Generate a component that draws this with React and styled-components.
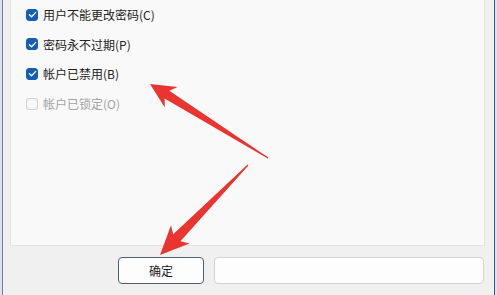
import React from 'react';
import styled, {createGlobalStyle} from 'styled-components';

const GlobalStyle = createGlobalStyle`
    html, body {
        margin: 0;
        padding: 0;
        background: #cfe0f1;
    }
    body {
        font-family: "Noto Sans CJK SC", "Noto Sans", sans-serif;
    }
`;

const Frame = styled.div`
    position: relative;
    width: 497px;
    height: 295px;
    overflow: hidden;
    background: #d6e4f2;
    padding: 0 2px 0 2px;
    box-sizing: border-box;
`;

const Window = styled.div`
    height: 100%;
    display: flex;
    flex-direction: column;
    background: #f0f0f0;
    border-left: 1px solid #71808e;
    border-right: 1px solid #2f5f9a;
`;

const Panel = styled.div`
    height: 246px;
    margin: 0 9px 0 7px;
    box-sizing: border-box;
    background: #f9f9f9;
    border: 1px solid #e4e4e4;
    border-top: none;
    padding-left: 15px;
    display: flex;
    flex-direction: column;
`;

const Row = styled.label`
    height: 29.6px;
    display: flex;
    align-items: center;
    gap: 5px;
    font-size: 12px;
    color: ${p => (p.disabled ? '#a3a3a3' : '#222')};
`;

const Box = styled.span`
    width: 12px;
    height: 12px;
    box-sizing: border-box;
    border-radius: 3px;
    display: flex;
    align-items: center;
    justify-content: center;
    background: ${p => (p.checked ? '#155fb3' : '#f8f8f8')};
    border: 1px solid ${p => (p.checked ? '#155fb3' : '#cfcfcf')};
`;

const Footer = styled.div`
    flex: 1;
    display: flex;
    justify-content: flex-end;
    align-items: flex-start;
    gap: 10px;
    padding: 11px 10px 0 0;
`;

const Button = styled.div`
    width: ${p => p.width}px;
    height: 27px;
    box-sizing: border-box;
    display: flex;
    align-items: center;
    justify-content: center;
    border-radius: 4px;
    background: #fdfdfd;
    border: 1px solid ${p => (p.primary ? '#4b6172' : '#d3d3d3')};
    font-size: 12px;
    color: #1b1b1b;
`;

const Overlay = styled.svg`
    position: absolute;
    left: 0;
    top: 0;
    pointer-events: none;
`;

const options = [
    {label: '用户不能更改密码(C)', checked: true},
    {label: '密码永不过期(P)', checked: true},
    {label: '帐户已禁用(B)', checked: true},
    {label: '帐户已锁定(O)', checked: false, disabled: true},
];

const arrowPoints = (tail, tip, headLen, headW, shaftW, tailW) => {
    const dx = tip[0] - tail[0];
    const dy = tip[1] - tail[1];
    const len = Math.hypot(dx, dy);
    const d = [dx / len, dy / len];
    const n = [-d[1], d[0]];
    const at = (base, along, side) => [base[0] + d[0] * along + n[0] * side, base[1] + d[1] * along + n[1] * side];
    const pts = [
        at(tail, 0, tailW),
        at(tip, -headLen, shaftW),
        at(tip, -headLen - 5, headW),
        tip,
        at(tip, -headLen - 5, -headW),
        at(tip, -headLen, -shaftW),
        at(tail, 0, -tailW),
    ];
    return pts.map(p => p[0].toFixed(1) + ',' + p[1].toFixed(1)).join(' ');
};

const Check = () => (
    <svg width="9" height="9" viewBox="0 0 10 10">
        <path d="M1.6 5.2 L4 7.5 L8.6 2.6" fill="none" stroke="#fff" strokeWidth="1.4" strokeLinecap="round" strokeLinejoin="round" />
    </svg>
);

export default function App() {
    return (
        <Frame>
            <GlobalStyle />
            <Window>
                <Panel>
                    {options.map(opt => (
                        <Row key={opt.label} disabled={opt.disabled}>
                            <Box checked={opt.checked}>{opt.checked && <Check />}</Box>
                            {opt.label}
                        </Row>
                    ))}
                </Panel>
                <Footer>
                    <Button primary width={86}>确定</Button>
                    <Button width={270} />
                </Footer>
            </Window>
            <Overlay width="497" height="295">
                <polygon points={arrowPoints([268, 158], [150, 84], 20, 12, 4.5, 0.6)} fill="#ea3430" />
                <polygon points={arrowPoints([248, 165], [160, 255], 24, 13, 5, 0.6)} fill="#ea3430" />
            </Overlay>
        </Frame>
    );
}
